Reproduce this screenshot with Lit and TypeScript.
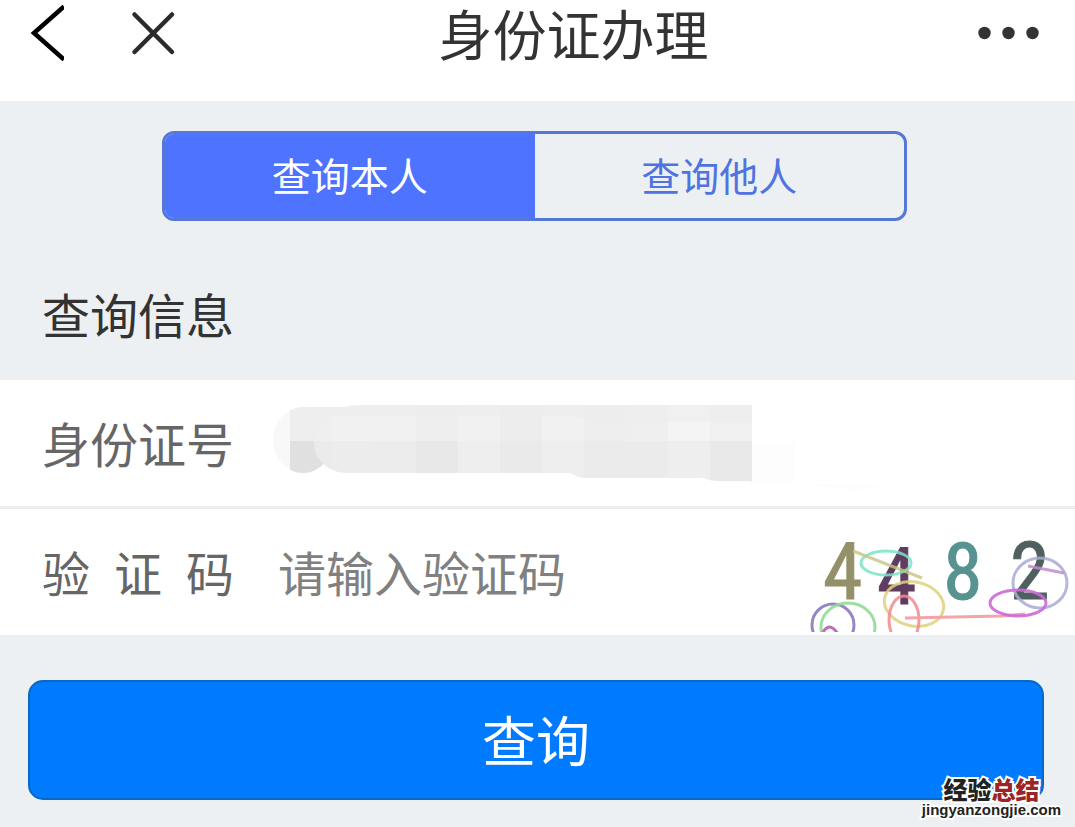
import { LitElement, html, css, svg } from "lit";
import { customElement, state } from "lit/decorators.js";

const mosaicTiles = [
  { x: 17, y: 2, w: 42, h: 34, c: "#eeeeee" },
  { x: 17, y: 36, w: 42, h: 44, c: "#e0e0e0" },
];

const upperTiles = ["#efefef", "#f1f1f1", "#f0f0f0", "#eeeeee", "#f1f1f1", "#ededed", "#f1f1f1", "#eeeeee", "#efefef", "#f4f4f4", "#f0f0f0"];
const lowerTiles = ["#ebebeb", "#ececec", "#ececec", "#e8e8e8", "#eeeeee", "#eaeaea", "#eeeeee", "#ebebeb", "#ebebeb", "#eeeeee", "#e9e9e9"];

@customElement("captcha-image")
export class CaptchaImage extends LitElement {
  static styles = css`
    :host {
      display: block;
    }
    .art {
      display: block;
      width: 265px;
      height: 116px;
    }
    .digit {
      font-family: "Liberation Sans Narrow", "Roboto Condensed", "Liberation Sans", sans-serif;
      font-size: 80px;
    }
  `;

  render() {
    return html`
      <svg class="art" viewBox="810 516 265 116" role="img" aria-label="4482">
        <g fill="none" stroke-width="3">
          <text class="digit" x="823" y="599" fill="#94916a" stroke="#94916a" stroke-width="1">4</text>
          <text class="digit" x="943" y="599" fill="#579390" stroke="#579390" stroke-width="1">8</text>
          <text class="digit" x="877" y="604" fill="#603d60" stroke="#603d60" stroke-width="1">4</text>
          <text class="digit" x="1010" y="599" fill="#506060" stroke="#506060" stroke-width="1">2</text>
          <ellipse cx="886" cy="563" rx="25" ry="12" stroke="#78e5c8" opacity=".85" />
          <path d="M853 551 L922 578" stroke="#c6c47e" opacity=".8" />
          <ellipse cx="914" cy="604" rx="30" ry="22" transform="rotate(12 914 604)" stroke="#ddd17c" opacity=".85" />
          <ellipse cx="904" cy="620" rx="15" ry="24" stroke="#f5878c" opacity=".85" />
          <path d="M905 618 L1002 616 L1025 614" stroke="#f3a6a6" />
          <ellipse cx="1040" cy="583" rx="27" ry="25" stroke="#a8acd5" opacity=".85" />
          <path d="M1028 566 L1064 573" stroke="#bf8ccf" opacity=".85" />
          <ellipse cx="1018" cy="603" rx="28" ry="13" stroke="#cf68d8" opacity=".9" />
          <circle cx="833" cy="625" r="21" stroke="#9587c7" />
          <ellipse cx="848" cy="627" rx="27" ry="24" stroke="#91dc97" opacity=".9" />
          <path d="M822 634 Q829 620 838 634" stroke="#b870b8" />
        </g>
      </svg>
    `;
  }
}

@customElement("app-root")
export class AppRoot extends LitElement {
  @state() private tab = 0;

  static styles = css`
    :host {
      display: block;
      position: relative;
      min-height: 100vh;
      background: #ecf0f3;
      color: #333;
      font-family: "Noto Sans CJK SC", sans-serif;
    }
    button,
    input {
      font: inherit;
      margin: 0;
      padding: 0;
      border: 0;
      border-radius: 0;
      background: none;
      color: inherit;
    }
    button {
      cursor: pointer;
    }
    .bar {
      box-sizing: border-box;
      display: grid;
      grid-template-columns: auto 1fr auto;
      align-items: start;
      height: 101px;
      padding: 0 36px 0 28px;
      background: #fff;
    }
    .nav {
      display: flex;
      gap: 64px;
    }
    .icon {
      display: block;
      height: 66px;
    }
    .icon svg {
      display: block;
    }
    .title {
      margin: 0;
      font-size: 54px;
      line-height: 66px;
      font-weight: 400;
      text-align: center;
    }
    .tabs {
      display: grid;
      grid-template-columns: 1fr 1fr;
      box-sizing: border-box;
      height: 90px;
      margin: 30px 168px 0 162px;
      border: 3px solid #5577d8;
      border-radius: 12px;
      overflow: hidden;
      font-size: 39px;
    }
    .tab {
      padding-bottom: 4px;
      color: #4f73e0;
    }
    .tab.on {
      background: #4d73ff;
      color: #fff;
    }
    .section {
      margin: 0;
      padding: 57px 42px 32px;
      font-size: 48px;
      line-height: 70px;
      font-weight: 400;
    }
    .rows {
      background: #fff;
      font-size: 48px;
      line-height: 70px;
      color: #666;
    }
    .row {
      display: flex;
      align-items: center;
      height: 123px;
      padding: 0 0 3px 42px;
    }
    .row + .row {
      border-top: 3px solid #ecefef;
    }
    .label {
      width: 4em;
      margin-right: 44px;
      text-align: justify;
      text-align-last: justify;
    }
    .value {
      position: relative;
      flex: 1;
      min-width: 0;
    }
    .field {
      display: block;
      width: 100%;
      height: 80px;
      outline: none;
    }
    .field::placeholder {
      color: #808080;
      opacity: 1;
    }
    .captcha {
      align-self: flex-end;
    }
    .mosaic {
      position: absolute;
      left: -5px;
      top: 3px;
      pointer-events: none;
    }
    .foot {
      padding: 45px 31px 27px 28px;
    }
    .submit {
      display: block;
      box-sizing: border-box;
      width: 100%;
      height: 120px;
      padding-bottom: 4px;
      border: 2px solid #0869c4;
      border-radius: 15px;
      background: #007aff;
      color: #fff;
      font-size: 54px;
    }
    .mark {
      position: absolute;
      right: 14px;
      bottom: 8px;
      color: #222;
      text-align: center;
      paint-order: stroke fill;
      -webkit-text-stroke: 4px #fff;
      pointer-events: none;
    }
    .mark-name {
      display: block;
      font-size: 24px;
      line-height: 24px;
      font-weight: 900;
    }
    .mark-red {
      color: #9c2424;
    }
    .mark-site {
      display: block;
      font-family: "Liberation Sans", sans-serif;
      font-size: 15px;
      line-height: 18px;
      font-weight: 700;
    }
  `;

  private mosaic() {
    return svg`
      <svg class="mosaic" width="620" height="86" viewBox="0 0 620 86" aria-hidden="true">
        <defs>
          <clipPath id="blot"><ellipse cx="30" cy="35" rx="30" ry="33" /></clipPath>
          <clipPath id="smear">
            <path d="M33 2 L72 2 Q78 0 88 0 H479 V77 Q477 76 474 76 H446 Q436 76 430 73 H314 Q304 73 298 68 H74 C54 68 41 52 41 39 Q41 22 52 12 L33 12 Z" />
          </clipPath>
        </defs>
        <path d="M479 37 H522 V78 H479 Z M522 78 L615 81 L580 85 Z" fill="#fdfdfd" />
        <ellipse cx="30" cy="35" rx="30" ry="33" fill="#f8f8f8" />
        <g clip-path="url(#blot)">
          ${mosaicTiles.map((t) => svg`<rect x=${t.x} y=${t.y} width=${t.w} height=${t.h} fill=${t.c} />`)}
        </g>
        <g clip-path="url(#smear)">
          ${upperTiles.map((c, i) => svg`<rect x=${17 + i * 42} y="0" width="42" height="36" fill=${c} />`)}
          ${lowerTiles.map((c, i) => svg`<rect x=${17 + i * 42} y="36" width="42" height="42" fill=${c} />`)}
          <path d="M33 0 H479 V17 H320 L300 11 H33 Z" fill="#ececec" opacity=".6" />
        </g>
      </svg>
    `;
  }

  render() {
    return html`
      <header class="bar">
        <div class="nav">
          <button class="icon" aria-label="返回">
            <svg width="36" height="66" viewBox="0 0 36 66">
              <path d="M36 6.5 L6 33 L36 59.5" fill="none" stroke="#000" stroke-width="4.5" />
            </svg>
          </button>
          <button class="icon" aria-label="关闭">
            <svg width="50" height="66" viewBox="0 0 50 66">
              <path d="M6.5 14.5 L44 52 M44 14.5 L6.5 52" fill="none" stroke="#2b2b2b" stroke-width="4.5" stroke-linecap="round" />
            </svg>
          </button>
        </div>
        <h1 class="title">身份证办理</h1>
        <button class="icon" aria-label="更多">
          <svg width="70" height="66" viewBox="-8 0 70 66" fill="#333">
            <circle cx="7.5" cy="33" r="6.2" />
            <circle cx="31.5" cy="33" r="6.2" />
            <circle cx="55.5" cy="33" r="6.2" />
          </svg>
        </button>
      </header>
      <main>
        <div class="tabs" role="tablist">
          ${["查询本人", "查询他人"].map(
            (name, i) => html`<button
              class="tab ${this.tab === i ? "on" : ""}"
              role="tab"
              aria-selected=${this.tab === i ? "true" : "false"}
              @click=${() => (this.tab = i)}
            >${name}</button>`
          )}
        </div>
        <h2 class="section">查询信息</h2>
        <div class="rows">
          <div class="row">
            <label class="label" for="id-number">身份证号</label>
            <div class="value">
              <input class="field" id="id-number" type="text" />
              ${this.mosaic()}
            </div>
          </div>
          <div class="row">
            <label class="label" for="code">验 证 码</label>
            <div class="value">
              <input class="field" id="code" type="text" placeholder="请输入验证码" />
            </div>
            <button class="captcha" aria-label="换一张验证码"><captcha-image></captcha-image></button>
          </div>
        </div>
        <div class="foot">
          <button class="submit">查询</button>
        </div>
      </main>
      <div class="mark">
        <span class="mark-name">经验<span class="mark-red">总结</span></span>
        <span class="mark-site">jingyanzongjie.com</span>
      </div>
    `;
  }
}
